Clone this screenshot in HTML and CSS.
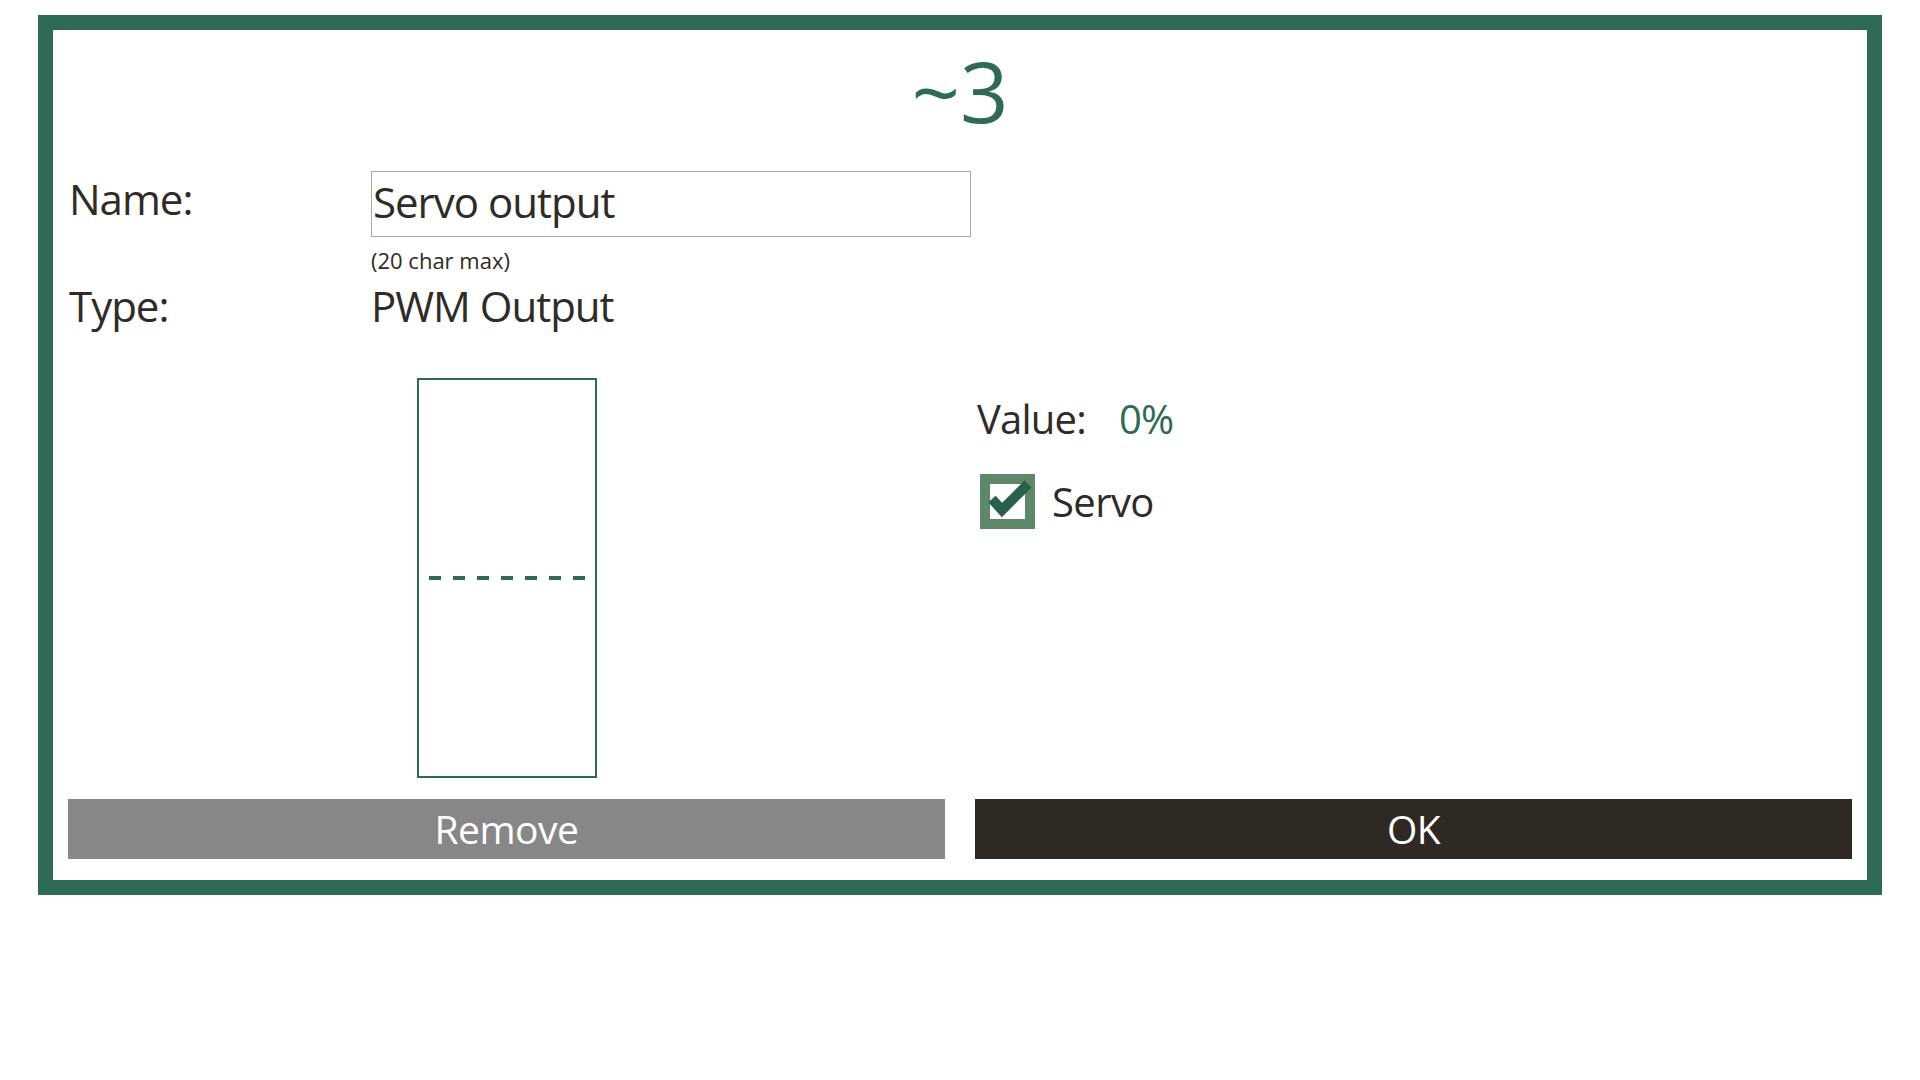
FILE: index.html
```html
<!DOCTYPE html>
<html lang="en">
<head>
<meta charset="utf-8">
<title>~3</title>
<link rel="stylesheet" href="styles.css">
</head>
<body>
<div class="dialog">
  <div class="title">~3</div>
  <div class="form">
    <div class="row">
      <div class="label">Name:</div>
      <input class="name-input" type="text" value="Servo output">
    </div>
    <div class="hint">(20 char max)</div>
    <div class="row row-type">
      <div class="label">Type:</div>
      <div class="value">PWM Output</div>
    </div>
  </div>
  <div class="main">
    <div class="bar-cell">
      <div class="bar">
        <div class="midline"></div>
      </div>
    </div>
    <div class="side">
      <div class="value-row">
        <span class="value-label">Value:</span>
        <span class="value-num">0%</span>
      </div>
      <div class="check-row">
        <div class="checkbox">
          <svg class="checkmark" width="55" height="55" viewBox="0 0 55 55">
            <polyline points="12,25 22,36 48,10" fill="none" stroke="#2a5f4c" stroke-width="10" stroke-linecap="butt" stroke-linejoin="miter"/>
          </svg>
        </div>
        <span class="check-label">Servo</span>
      </div>
    </div>
  </div>
  <div class="buttons">
    <div class="btn btn-remove">Remove</div>
    <div class="btn btn-ok">OK</div>
  </div>
</div>
</body>
</html>
```
FILE: styles.css
```css
html, body {
  margin: 0;
  padding: 0;
  background: #ffffff;
}
body {
  font-family: "Open Sans", "Noto Sans", sans-serif;
  color: #2f2b27;
}
.dialog {
  box-sizing: border-box;
  width: 1844px;
  height: 880px;
  margin: 15px 0 0 38px;
  border: 15px solid #2e6a56;
  padding: 10px 15px 21px 15px;
  display: flex;
  flex-direction: column;
  background: #ffffff;
}
.title {
  height: 100px;
  line-height: 100px;
  font-size: 85px;
  text-align: center;
  color: #2e6a56;
}
.form {
  margin-top: 31px;
  padding-left: 1px;
}
.row {
  display: flex;
  align-items: flex-start;
}
.label {
  width: 302px;
  font-size: 42px;
  line-height: 55px;
  letter-spacing: -1px;
}
.name-input {
  box-sizing: border-box;
  width: 600px;
  height: 66px;
  margin: 0;
  border: 1px solid #aaaaaa;
  padding: 0 3px 5px 1px;
  font-family: "Open Sans", "Noto Sans", sans-serif;
  font-size: 42px;
  letter-spacing: -1px;
  color: #2f2b27;
  background: #ffffff;
  outline: none;
  border-radius: 0;
}
.hint {
  margin-left: 302px;
  margin-top: 8px;
  font-size: 22px;
  line-height: 30px;
}
.row-type {
  margin-top: 3px;
}
.value {
  font-size: 42px;
  line-height: 55px;
  letter-spacing: -1px;
}
.main {
  margin-top: 45px;
  height: 400px;
  display: grid;
  grid-template-columns: 877px 877px;
  column-gap: 30px;
}
.bar-cell {
  display: flex;
  justify-content: center;
}
.bar {
  box-sizing: border-box;
  width: 180px;
  height: 400px;
  border: 2px solid #2e6a56;
  display: flex;
  flex-direction: column;
  justify-content: center;
}
.midline {
  height: 4px;
  margin: 0 10px 0 10px;
  background: repeating-linear-gradient(90deg, #2e6a56 0 12px, transparent 12px 24px);
}
.side {
  padding-left: 2px;
}
.value-row {
  margin-top: 17px;
  font-size: 40px;
  line-height: 48px;
  display: flex;
  letter-spacing: -0.8px;
}
.value-label {
  width: 142px;
}
.value-num {
  color: #2e6a56;
}
.check-row {
  margin-top: 31px;
  margin-left: 3px;
  display: flex;
  align-items: center;
  gap: 17px;
  height: 55px;
}
.checkbox {
  position: relative;
  box-sizing: border-box;
  width: 55px;
  height: 55px;
  border: 10px solid #5f8769;
  background: #ffffff;
  flex: none;
}
.checkmark {
  position: absolute;
  left: -10px;
  top: -10px;
  overflow: visible;
}
.check-label {
  font-size: 40px;
  line-height: 48px;
  letter-spacing: -0.6px;
}
.buttons {
  margin-top: 21px;
  display: grid;
  grid-template-columns: 877px 877px;
  column-gap: 30px;
  height: 60px;
}
.btn {
  height: 60px;
  line-height: 60px;
  font-size: 39px;
  letter-spacing: -0.5px;
  color: #ffffff;
  text-align: center;
}
.btn-remove {
  background: #878787;
}
.btn-ok {
  background: #2e2923;
}
```
